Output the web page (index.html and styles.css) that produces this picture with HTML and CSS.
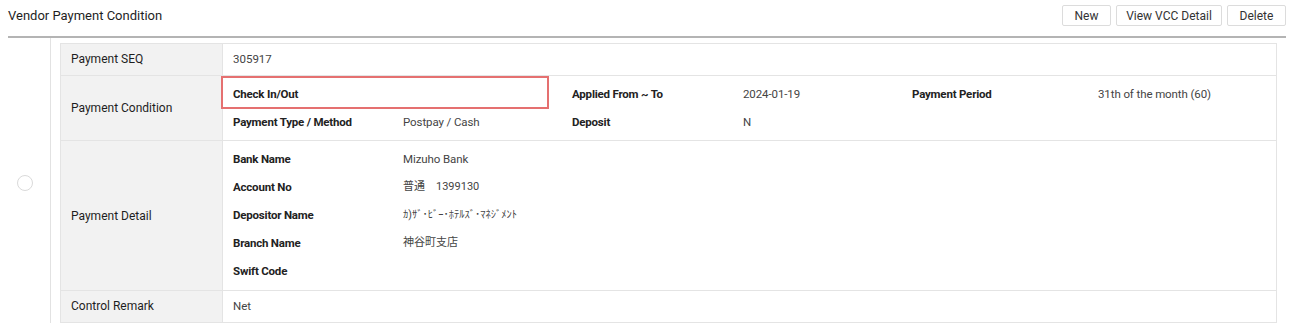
FILE: index.html
```html
<!DOCTYPE html>
<html lang="en">
<head>
  <meta charset="UTF-8">
  <meta name="viewport" content="width=device-width, initial-scale=1.0">
  <title>Vendor Payment Condition</title>
  <link rel="stylesheet" href="styles.css">
</head>
<body>
  <div class="page">
    <div class="header">
      <h2 class="title">Vendor Payment Condition</h2>
      <div class="actions">
        <button class="btn btn-new">New</button>
        <button class="btn btn-vcc">View VCC Detail</button>
        <button class="btn btn-delete">Delete</button>
      </div>
    </div>

    <div class="record">
      <div class="select">
        <span class="radio"></span>
      </div>
      <div class="detail">
        <table class="info">
          <colgroup>
            <col class="label-col">
            <col>
          </colgroup>
          <tr class="single">
            <th>Payment SEQ</th>
            <td>305917</td>
          </tr>
          <tr>
            <th>Payment Condition</th>
            <td class="block">
              <!-- highlighted field -->
              <span class="highlight"></span>
              <div class="fields wide">
                <span class="key">Check In/Out</span>
                <span class="val"></span>
                <span class="key">Applied From ~ To</span>
                <span class="val">2024-01-19</span>
                <span class="key">Payment Period</span>
                <span class="val">31th of the month (60)</span>
                <span class="key">Payment Type / Method</span>
                <span class="val">Postpay / Cash</span>
                <span class="key">Deposit</span>
                <span class="val">N</span>
              </div>
            </td>
          </tr>
          <tr>
            <th>Payment Detail</th>
            <td class="block tall">
              <div class="fields narrow">
                <span class="key">Bank Name</span>
                <span class="val">Mizuho Bank</span>
                <span class="key">Account No</span>
                <span class="val cjk">普通　1399130</span>
                <span class="key">Depositor Name</span>
                <span class="val kana">ｶ)ｻﾞ･ﾋﾞｰ･ﾎﾃﾙｽﾞ･ﾏﾈｼﾞﾒﾝﾄ</span>
                <span class="key">Branch Name</span>
                <span class="val cjk">神谷町支店</span>
                <span class="key">Swift Code</span>
                <span class="val"></span>
              </div>
            </td>
          </tr>
          <tr class="single">
            <th>Control Remark</th>
            <td>Net</td>
          </tr>
        </table>
      </div>
    </div>
  </div>
</body>
</html>
```

FILE: styles.css
```css
body {
  margin: 0;
  font-family: Roboto, "Noto Sans", "Noto Sans CJK JP", sans-serif;
  font-size: 12px;
  color: #222;
  background-color: #fff;
}
.page {
  padding: 0 5px 0 8px;
}
.header {
  display: flex;
  justify-content: space-between;
  align-items: flex-start;
  height: 38px;
  padding-top: 5px;
  box-sizing: border-box;
  border-bottom: 2px solid #b4b4b4;
}
.title {
  margin: 0;
  font-size: 13px;
  font-weight: 400;
  line-height: 22px;
  color: #1e1e1e;
}
.actions {
  display: flex;
  gap: 5px;
}
.btn {
  height: 21px;
  padding: 0;
  font-family: inherit;
  font-size: 12px;
  color: #333;
  background-color: #fff;
  border: 1px solid #dcdcdc;
  border-radius: 2px;
  cursor: pointer;
}
.btn-new {
  width: 49px;
}
.btn-vcc {
  width: 106px;
}
.btn-delete {
  width: 59px;
}
.record {
  display: flex;
}
.select {
  width: 43px;
  flex-shrink: 0;
  border-right: 1px solid #e2e2e2;
  display: flex;
  align-items: center;
  padding-left: 9px;
  box-sizing: border-box;
}
.radio {
  width: 14px;
  height: 14px;
  border: 1px solid #dadada;
  border-radius: 50%;
  background-color: #fff;
}
.detail {
  flex: 1;
  padding: 5px 9px 4px 9px;
}
.info {
  width: 100%;
  border-collapse: collapse;
  table-layout: fixed;
}
.label-col {
  width: 162px;
}
.info th,
.info td {
  border: 1px solid #e4e4e4;
  padding: 0 10px;
  vertical-align: middle;
}
.info th {
  background-color: #f2f2f2;
  text-align: left;
  font-weight: 400;
  color: #1e1e1e;
}
.info td {
  color: #444;
  font-size: 11.5px;
}
.single th,
.single td {
  line-height: 31px;
}
.info td.block {
  position: relative;
  padding: 4px 10px 4px;
}
.info td.block.tall {
  padding-bottom: 5px;
}
.fields {
  display: grid;
  line-height: 28px;
}
.fields.wide {
  grid-template-columns: 170px 169px 171px 169px 186px 1fr;
}
.fields.narrow {
  grid-template-columns: 170px 1fr;
}
.key {
  font-weight: 700;
  font-size: 11.5px;
  letter-spacing: -0.2px;
  color: #222;
}
.val {
  color: #444;
  letter-spacing: -0.1px;
}
.val.cjk {
  font-size: 11px;
  letter-spacing: 0;
}
.val.kana {
  font-size: 10.5px;
  letter-spacing: 0;
}
.highlight {
  position: absolute;
  left: -2px;
  top: 0;
  width: 324px;
  height: 29px;
  border: 2px solid #e57070;
  pointer-events: none;
}
```
